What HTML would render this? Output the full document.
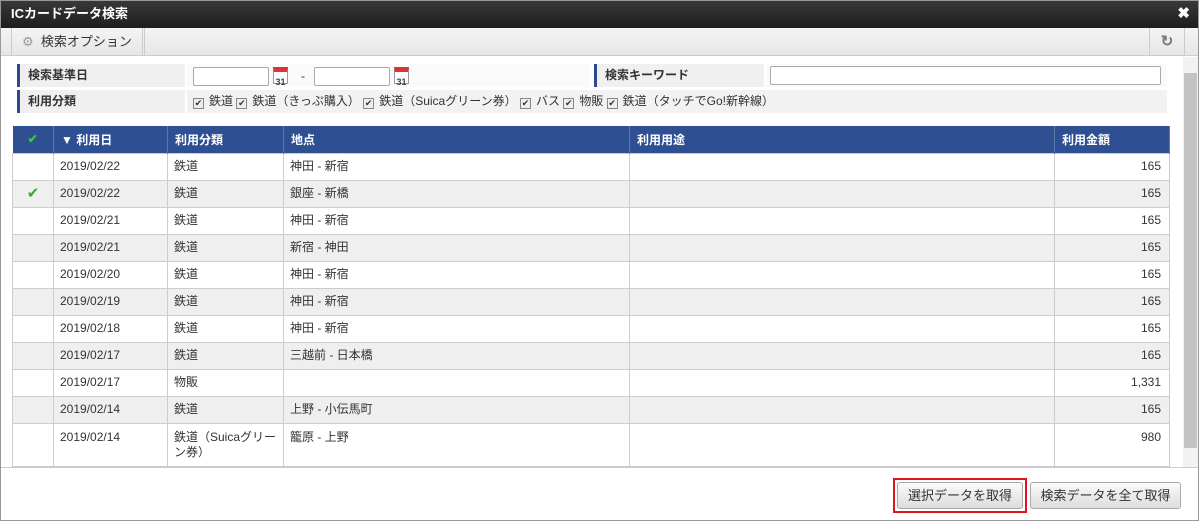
<!DOCTYPE html>
<html><head><meta charset="utf-8"><style>
*{box-sizing:border-box;margin:0;padding:0}
body{width:1199px;height:521px;overflow:hidden;background:#fff;font-family:"Liberation Sans","Noto Sans CJK JP",sans-serif;font-size:12px;color:#333;position:relative}
.abs{position:absolute}
.title{left:0;top:0;width:1199px;height:28px;background:linear-gradient(#3a3a3a,#1e1e1e);color:#fff;font-weight:bold;font-size:13px;line-height:28px;padding-left:11px}
.tb{left:0;top:28px;width:1199px;height:28px;background:linear-gradient(#f4f4f4,#e6e6e6);border-bottom:1px solid #ccc}
.lab{background:#f0f0f0;border-left:3px solid #2c4a8c;font-weight:bold;line-height:23px;padding-left:8px}
.inp{background:#fff;border:1px solid #aaa;border-radius:2px;height:19px}
table{border-collapse:collapse;position:absolute;left:12px;top:126px;width:1157px;table-layout:fixed}
th{background:#2e5093;color:#fff;font-weight:bold;text-align:left;height:27px;padding-left:7px;border-right:1px solid #5d77ad}
td{height:27px;border:1px solid #ccc;padding-left:6px;line-height:15px}
tr:nth-child(odd) td{background:#efefef}
td.r{text-align:right;padding-right:8px}
.btn{border:1px solid #aaa;border-radius:3px;background:linear-gradient(#fafafa,#ddd);height:27px;line-height:25px;text-align:center;font-size:13px}
.cb{display:inline-block;width:11px;height:11px;border:1px solid #888;background:#eee;vertical-align:-1px;font-size:9px;line-height:9px;text-align:center;margin-right:5px}
.cal{width:15px;height:17px;border:1px solid #999;background:#fff;font-size:9px;text-align:center;line-height:20px;color:#444;border-top:5px solid #d33;font-weight:bold}
</style></head><body>
<div class="abs title">ICカードデータ検索<span style="position:absolute;right:9px;font-size:15px">✖</span></div>
<div class="abs tb">
<div class="abs" style="left:11px;top:0;width:134px;height:27px;border-left:1px solid #ccc;border-right:3px double #ccc;line-height:27px;padding-left:10px;font-size:13px"><span style="color:#999">⚙</span>&nbsp; 検索オプション</div>
<div class="abs" style="right:14px;top:0;width:36px;height:27px;border-left:1px solid #ccc;border-right:1px solid #ccc;text-align:center;line-height:27px;color:#777;font-weight:bold;font-size:15px">↻</div>
</div>
<div class="abs" style="left:1183px;top:57px;width:15px;height:410px;background:#f2f2f2"><div class="abs" style="left:1px;top:16px;width:13px;height:375px;background:#c3c3c3"></div></div>
<div class="abs lab" style="left:17px;top:64px;width:168px;height:23px">検索基準日</div>
<div class="abs" style="left:187px;top:64px;width:402px;height:23px;background:#fafafa"></div>
<div class="abs inp" style="left:193px;top:67px;width:76px"></div><div class="abs cal" style="left:273px;top:67px">31</div>
<div class="abs" style="left:301px;top:69px">-</div>
<div class="abs inp" style="left:314px;top:67px;width:76px"></div><div class="abs cal" style="left:394px;top:67px">31</div>
<div class="abs lab" style="left:594px;top:64px;width:170px;height:23px">検索キーワード</div>
<div class="abs" style="left:766px;top:64px;width:401px;height:23px;background:#fafafa"></div>
<div class="abs inp" style="left:770px;top:66px;width:391px"></div>
<div class="abs lab" style="left:17px;top:90px;width:168px;height:23px">利用分類</div>
<div class="abs" style="left:187px;top:90px;width:980px;height:23px;background:#f2f2f2;line-height:23px;padding-left:6px"><span class="cb">✔</span>鉄道 <span class="cb">✔</span>鉄道（きっぷ購入） <span class="cb">✔</span>鉄道（Suicaグリーン券） <span class="cb">✔</span>バス <span class="cb">✔</span>物販 <span class="cb">✔</span>鉄道（タッチでGo!新幹線）</div>
<table>
<colgroup><col style="width:41px"><col style="width:114px"><col style="width:116px"><col style="width:346px"><col style="width:425px"><col style="width:115px"></colgroup>
<tr><th style="text-align:center;padding:0;color:#3c3">✔</th><th>▼ 利用日</th><th>利用分類</th><th>地点</th><th>利用用途</th><th>利用金額</th></tr>
<tr><td></td><td>2019/02/22</td><td>鉄道</td><td>神田 - 新宿</td><td></td><td class="r">165</td></tr>
<tr><td style="text-align:center;padding:0;color:#3a3;font-size:15px">✔</td><td>2019/02/22</td><td>鉄道</td><td>銀座 - 新橋</td><td></td><td class="r">165</td></tr>
<tr><td></td><td>2019/02/21</td><td>鉄道</td><td>神田 - 新宿</td><td></td><td class="r">165</td></tr>
<tr><td></td><td>2019/02/21</td><td>鉄道</td><td>新宿 - 神田</td><td></td><td class="r">165</td></tr>
<tr><td></td><td>2019/02/20</td><td>鉄道</td><td>神田 - 新宿</td><td></td><td class="r">165</td></tr>
<tr><td></td><td>2019/02/19</td><td>鉄道</td><td>神田 - 新宿</td><td></td><td class="r">165</td></tr>
<tr><td></td><td>2019/02/18</td><td>鉄道</td><td>神田 - 新宿</td><td></td><td class="r">165</td></tr>
<tr><td></td><td>2019/02/17</td><td>鉄道</td><td>三越前 - 日本橋</td><td></td><td class="r">165</td></tr>
<tr><td></td><td>2019/02/17</td><td>物販</td><td></td><td></td><td class="r">1,331</td></tr>
<tr><td></td><td>2019/02/14</td><td>鉄道</td><td>上野 - 小伝馬町</td><td></td><td class="r">165</td></tr>
<tr><td style="height:43px;vertical-align:top;padding-top:6px"></td><td style="vertical-align:top;padding-top:6px">2019/02/14</td><td style="vertical-align:top;padding-top:6px">鉄道（Suicaグリーン券）</td><td style="vertical-align:top;padding-top:6px">籠原 - 上野</td><td></td><td class="r" style="vertical-align:top;padding-top:6px">980</td></tr>
</table>
<div class="abs" style="left:0;top:467px;width:1199px;height:54px;background:#fff;border-top:1px solid #ccc"></div>
<div class="abs" style="left:893px;top:478px;width:134px;height:35px;border:2px solid #e0141e"></div>
<div class="abs btn" style="left:897px;top:482px;width:126px">選択データを取得</div>
<div class="abs btn" style="left:1030px;top:482px;width:151px">検索データを全て取得</div>
<div class="abs" style="left:0;top:0;width:1199px;height:521px;border:1px solid #999;pointer-events:none"></div>
</body></html>
